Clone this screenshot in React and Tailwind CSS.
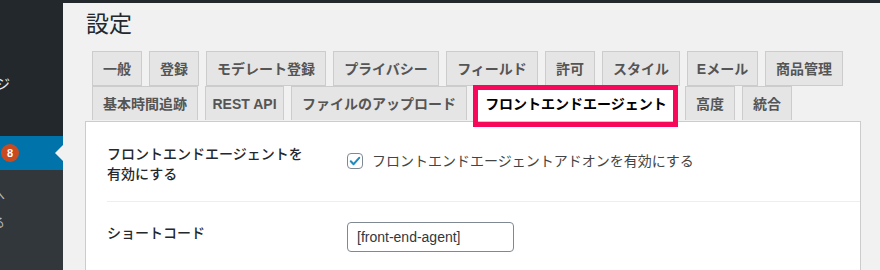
import React from "react";

const row1 = [
  { label: "一般", w: "w-[50px]" },
  { label: "登録", w: "w-[50px]" },
  { label: "モデレート登録", w: "w-[120px]" },
  { label: "プライバシー", w: "w-[106px]" },
  { label: "フィールド", w: "w-[92px]" },
  { label: "許可", w: "w-[50px]" },
  { label: "スタイル", w: "w-[78px]" },
  { label: "Eメール", w: "w-[71px]" },
  { label: "商品管理", w: "w-[78px]" },
];

const row2 = [
  { label: "基本時間追跡", w: "w-[106px]" },
  { label: "REST API", w: "w-[79px]" },
  { label: "ファイルのアップロード", w: "w-[176px]" },
  { label: "フロントエンドエージェント", w: "w-[204px]", active: true },
  { label: "高度", w: "w-[50px]" },
  { label: "統合", w: "w-[50px]" },
];

const Tab = ({ tab, last }) => {
  if (tab.active) {
    return (
      <div
        className={`relative z-10 ${tab.w} h-[35px] flex items-center justify-center bg-white text-black font-bold text-[14px] leading-[24px] whitespace-nowrap`}
      >
        {tab.label}
        <span className="absolute left-[-1px] top-[-1px] right-0 bottom-[-6px] border-[5px] border-[#f7085a] pointer-events-none" />
      </div>
    );
  }
  return (
    <div
      className={`${tab.w} ${last ? "h-[34px] border-b-0" : "h-[35px]"} flex items-center justify-center bg-[#e5e5e5] border border-[#cccccc] text-[#555555] font-bold text-[14px] leading-[24px] whitespace-nowrap`}
    >
      {tab.label}
    </div>
  );
};

const Sidebar = () => (
  <div className="w-[63px] shrink-0 flex flex-col overflow-hidden">
    <div className="h-[133px] bg-[#23282d] pt-[71px]">
      <div className="ml-[-4px] text-[14px] leading-[20px] text-[#eeeeee]">ジ</div>
    </div>
    <div className="relative h-[34px] bg-[#0073aa] flex items-center">
      <span className="ml-[1px] w-[18px] h-[18px] rounded-full bg-[#ca4a1f] text-white text-[11px] font-bold leading-[18px] text-center">
        8
      </span>
      <span className="absolute right-0 top-[9px] w-0 h-0 border-y-[8px] border-y-transparent border-r-[8px] border-r-[#f1f1f1]" />
    </div>
    <div className="flex-1 bg-[#32373c] pt-[11px] text-[13px] leading-[28px] text-[#b4b9be]">
      <div className="ml-[-8px]">へ</div>
      <div className="ml-[-8px]">る</div>
    </div>
  </div>
);

const CheckIcon = () => (
  <span className="w-[16px] h-[16px] shrink-0 rounded-[4px] border border-[#7e8993] bg-white flex items-center justify-center">
    <svg width="14" height="14" viewBox="0 0 20 20">
      <path d="M4 10.5l4 4 8-9" fill="none" stroke="#1e8cbe" strokeWidth="3" strokeLinecap="round" strokeLinejoin="round" />
    </svg>
  </span>
);

export default function App() {
  return (
    <div className="w-[880px] h-[270px] overflow-hidden flex flex-col bg-[#f1f1f1] font-['Liberation_Sans','Noto_Sans_CJK_JP',sans-serif]">
      <div className="h-[3px] shrink-0 bg-[#23282d]" />
      <div className="flex flex-1 min-h-0">
        <Sidebar />
        <div className="flex-1 flex flex-col pl-[22px] pr-[19px] pt-[7px]">
          <h1 className="ml-[1px] text-[23px] leading-[29px] text-[#23282d] font-normal">設定</h1>

          <div className="mt-[12px] pl-[7px] flex flex-col">
            <div className="flex gap-[7px]">
              {row1.map((t) => (
                <Tab key={t.label} tab={t} />
              ))}
            </div>
            <div className="flex gap-[7px]">
              {row2.map((t) => (
                <Tab key={t.label} tab={t} last />
              ))}
            </div>
          </div>

          <div className="flex-1 bg-white border border-b-0 border-[#cccccc] pl-[21px]">
            <div className="flex h-[80px] border-b border-[#eeeeee]">
              <div className="w-[240px] pt-[22px] text-[14px] leading-[20px] font-medium text-[#23282d]">
                フロントエンドエージェントを
                <br />
                有効にする
              </div>
              <label className="pt-[31px] flex items-start gap-[9px] text-[14px] leading-[18px] text-[#444444]">
                <CheckIcon />
                <span className="-mt-[1px]">フロントエンドエージェントアドオンを有効にする</span>
              </label>
            </div>
            <div className="flex">
              <div className="w-[240px] pt-[21px] text-[14px] leading-[20px] font-medium text-[#23282d]">
                ショートコード
              </div>
              <div className="pt-[20px]">
                <input
                  readOnly
                  value="[front-end-agent]"
                  className="w-[167px] h-[30px] px-[9px] rounded-[4px] border border-[#7e8993] text-[14px] text-[#32373c] bg-white outline-none"
                />
              </div>
            </div>
          </div>
        </div>
      </div>
    </div>
  );
}
